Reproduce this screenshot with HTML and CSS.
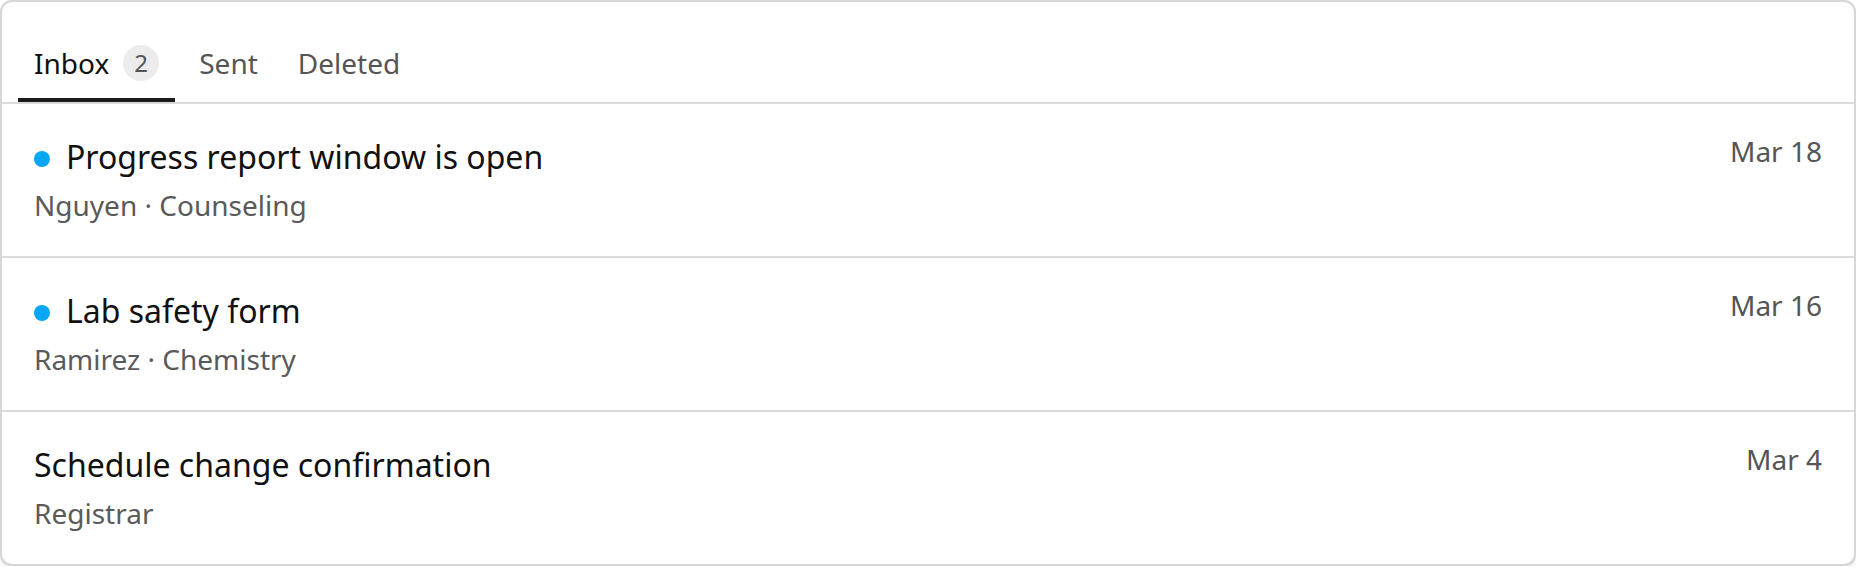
FILE: index.html
```html
<!DOCTYPE html>
<html lang="en">
<head>
    <meta charset="UTF-8">
    <meta name="viewport" content="width=device-width, initial-scale=1.0">
    <title>Messages</title>
    <link rel="stylesheet" href="styles.css">
</head>
<body>
    <div class="mailbox">
        <!-- Tabs -->
        <div class="tabs">
            <div class="tab active">
                <span>Inbox</span>
                <span class="badge">2</span>
            </div>
            <div class="tab">Sent</div>
            <div class="tab">Deleted</div>
        </div>

        <!-- Message list -->
        <div class="message-list">
            <div class="message unread">
                <div class="message-body">
                    <div class="message-title">
                        <span class="dot"></span>
                        <span>Progress report window is open</span>
                    </div>
                    <div class="message-meta">Nguyen · Counseling</div>
                </div>
                <div class="message-date">Mar 18</div>
            </div>
            <div class="message unread">
                <div class="message-body">
                    <div class="message-title">
                        <span class="dot"></span>
                        <span>Lab safety form</span>
                    </div>
                    <div class="message-meta">Ramirez · Chemistry</div>
                </div>
                <div class="message-date">Mar 16</div>
            </div>
            <div class="message">
                <div class="message-body">
                    <div class="message-title">
                        <span>Schedule change confirmation</span>
                    </div>
                    <div class="message-meta">Registrar</div>
                </div>
                <div class="message-date">Mar 4</div>
            </div>
        </div>
    </div>
</body>
</html>
```

FILE: styles.css
```css
body {
    margin: 0;
    padding: 0;
    background: #fff;
    font-family: "Noto Sans", "Open Sans", sans-serif;
    color: #111;
}

.mailbox {
    box-sizing: border-box;
    width: 100%;
    background: #fff;
    border: 2px solid #d6d6d6;
    border-radius: 12px;
    box-shadow: 0 2px 3px rgba(0, 0, 0, 0.12);
    overflow: hidden;
}

.tabs {
    display: flex;
    gap: 8px;
    padding: 0 16px;
    border-bottom: 2px solid #dadada;
}

.tab {
    display: flex;
    align-items: center;
    gap: 14px;
    padding: 43px 16px 17px;
    font-size: 28px;
    line-height: 36px;
    color: #555;
    border-bottom: 4px solid transparent;
}

.tab.active {
    color: #111;
    border-bottom-color: #1a1a1a;
}

.badge {
    display: flex;
    align-items: center;
    justify-content: center;
    width: 36px;
    height: 36px;
    border-radius: 50%;
    background: #ececec;
    color: #555;
    font-size: 24px;
}

.message {
    display: flex;
    justify-content: space-between;
    align-items: flex-start;
    padding: 31px 32px 34px;
    border-bottom: 2px solid #dadada;
}

.message:last-child {
    border-bottom: none;
}

.message-title {
    display: flex;
    align-items: center;
    gap: 16px;
    font-size: 32px;
    line-height: 44px;
    color: #111;
}

.dot {
    width: 16px;
    height: 16px;
    margin-top: 4px;
    border-radius: 50%;
    background: #05a6f5;
}

.message-meta {
    margin-top: 9px;
    font-size: 28px;
    line-height: 34px;
    color: #5a5a5a;
}

.message-date {
    font-size: 28px;
    line-height: 32px;
    color: #555;
}
```
